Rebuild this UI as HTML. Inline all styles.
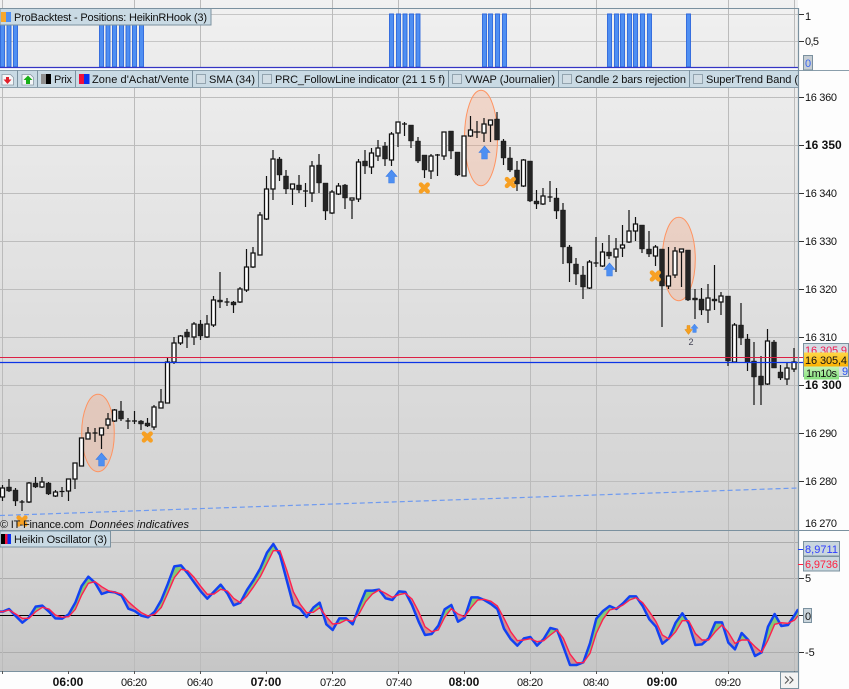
<!DOCTYPE html>
<html><head><meta charset="utf-8"><title>Chart</title>
<style>html,body{margin:0;padding:0;background:#fff;overflow:hidden;width:849px;height:689px}svg{display:block;overflow:hidden}text{font-family:"Liberation Sans",sans-serif;fill:#111}</style>
</head><body>
<svg xmlns="http://www.w3.org/2000/svg" width="849" height="689" viewBox="0 0 849 689">
<defs>
<linearGradient id="gT" x1="0" y1="0" x2="0" y2="1"><stop offset="0" stop-color="#f1f1f1"/><stop offset="1" stop-color="#ebebeb"/></linearGradient>
<linearGradient id="gM" x1="0" y1="0" x2="0" y2="1"><stop offset="0" stop-color="#ececec"/><stop offset="1" stop-color="#d2d2d2"/></linearGradient>
<linearGradient id="gO" x1="0" y1="0" x2="0" y2="1"><stop offset="0" stop-color="#d6d6d6"/><stop offset="1" stop-color="#c6c6c6"/></linearGradient>
<linearGradient id="gY" x1="0" y1="0" x2="0" y2="1"><stop offset="0" stop-color="#ffd84a"/><stop offset="1" stop-color="#fbb000"/></linearGradient>
<linearGradient id="gG" x1="0" y1="0" x2="0" y2="1"><stop offset="0" stop-color="#c4f4b4"/><stop offset="1" stop-color="#84e07c"/></linearGradient>
<clipPath id="cO"><rect x="0" y="531" width="798" height="140"/></clipPath>
<path id="bu" d="M-30 245L0 245 8 245 27 237 47 258 67 278 87 262 107 230 127 227 147 245 166 265 186 266 206 253 226 218 245 168 265 140 285 158 305 192 325 185 345 187 365 197 385 236 404 243 424 257 444 262 464 245 484 210 503 163 523 109 543 106 563 130 583 158 603 185 622 206 642 185 662 164 682 190 701 226 721 218 741 180 761 150 781 115 801 68 820 42 840 75 860 150 880 225 900 236 920 261 940 233 959 218 979 283 998 300 1018 265 1038 265 1058 283 1078 228 1097 182 1117 182 1137 179 1157 205 1177 210 1197 184 1216 186 1236 225 1256 275 1275 315 1295 312 1315 287 1334 238 1354 225 1374 275 1394 263 1414 202 1433 202 1453 210 1473 222 1492 237 1512 296 1532 327 1552 347 1572 325 1591 321 1611 347 1631 327 1651 294 1671 299 1690 350 1710 405 1730 405 1750 397 1770 340 1789 266 1809 243 1829 228 1849 237 1869 220 1889 199 1908 199 1928 228 1948 268 1968 290 1987 341 2007 325 2027 278 2047 250 2066 280 2086 345 2106 343 2126 325 2146 277 2166 277 2185 338 2205 358 2225 309 2245 330 2265 378 2285 367 2304 290 2324 252 2344 288 2364 285 2384 255 2393 240 2420 240 2420 450-30 450Z"/>
<path id="ru" d="M-30 245L0 245 8 245 27 240 47 252 67 265 87 265 107 245 127 232 147 237 166 255 186 262 206 260 226 238 245 195 265 160 285 155 305 170 325 182 345 187 365 192 385 215 404 232 424 248 444 258 464 253 484 232 503 190 523 143 543 118 563 122 583 143 603 170 622 193 642 192 662 178 682 183 701 205 721 218 741 198 761 170 781 140 801 100 820 62 840 62 860 120 880 185 900 222 920 248 940 247 959 233 979 260 998 282 1018 280 1038 270 1058 274 1078 250 1097 215 1117 192 1137 180 1157 190 1177 202 1197 194 1216 190 1236 207 1256 245 1275 290 1295 305 1315 300 1334 262 1354 236 1374 252 1394 260 1414 232 1433 210 1453 208 1473 214 1492 228 1512 265 1532 305 1552 332 1572 330 1591 326 1611 335 1631 332 1651 315 1671 300 1690 325 1710 372 1730 398 1750 398 1770 370 1789 310 1809 268 1829 240 1849 235 1869 225 1889 210 1908 203 1928 218 1948 245 1968 275 1987 315 2007 327 2027 305 2047 272 2066 272 2086 310 2106 330 2126 330 2146 305 2166 285 2185 307 2205 340 2225 330 2245 330 2265 350 2285 367 2304 330 2324 283 2344 278 2364 280 2384 270 2393 258 2420 258 2420 450-30 450Z"/>
<mask id="mR" maskUnits="userSpaceOnUse" x="-35" y="-5" width="2470" height="460"><rect x="-35" y="-5" width="2470" height="460" fill="#fff"/><use href="#ru" fill="#000"/></mask>
<mask id="mB" maskUnits="userSpaceOnUse" x="-35" y="-5" width="2470" height="460"><rect x="-35" y="-5" width="2470" height="460" fill="#fff"/><use href="#bu" fill="#000"/></mask>
<path id="arU" d="M0 0L5.500 6.500H2.800V13H-2.800V6.500H-5.500Z" fill="#4d8ff2" stroke="#3a7be6" stroke-width=".6"/>
<path id="xm" d="M-3.400-3.400L3.400 3.400M3.400-3.400L-3.400 3.400" stroke="#f7a023" stroke-width="4.400" stroke-linecap="round" fill="none"/>
</defs>

<rect width="849" height="689" fill="#fdfdfd"/>
<!-- panels -->
<rect x="0" y="0" width="798" height="68" fill="url(#gT)"/>
<rect x="0" y="87" width="798" height="444" fill="url(#gM)"/>
<rect x="0" y="531" width="798" height="140" fill="url(#gO)"/>

<!-- grid -->
<path d="M0 14.500H798M0 41.500H798" stroke="#c6c6c6" fill="none"/>
<path d="M0 97.500H798M0 145.500H798M0 193.500H798M0 241.500H798M0 289.500H798M0 337.500H798M0 385.500H798M0 433.500H798M0 481.500H798" stroke="#bdbdbd" fill="none"/>
<path d="M0 542.500H798M0 578.500H798M0 652.500H798" stroke="#adadad" fill="none"/>
<path d="M2.500 0V68M134.500 0V68M200.500 0V68M332.500 0V68M398.500 0V68M530.500 0V68M596.500 0V68M728.500 0V68M794.500 0V68M2.500 87V671M134.500 87V671M200.500 87V671M332.500 87V671M398.500 87V671M530.500 87V671M596.500 87V671M728.500 87V671M794.500 87V671" stroke="#bbb" fill="none"/>

<!-- position bars -->
<path fill="#4f8ff2" stroke="#2c66dc" stroke-width=".9" d="M.5 14h4v53h-4zM7 14h4v53h-4zM13.500 14h4v53h-4zM99.500 14h4v53h-4zM106 14h4v53h-4zM112.500 14h4v53h-4zM119.500 14h4v53h-4zM126 14h4v53h-4zM132.500 14h4v53h-4zM139.500 14h4v53h-4zM389.500 14h4v53h-4zM396.500 14h4v53h-4zM403 14h4v53h-4zM409.500 14h4v53h-4zM416 14h4v53h-4zM482.500 14h4v53h-4zM488.500 14h4v53h-4zM495.500 14h4v53h-4zM502.500 14h4v53h-4zM607.500 14h4v53h-4zM614.500 14h4v53h-4zM620.500 14h4v53h-4zM627.500 14h4v53h-4zM633.500 14h4v53h-4zM640.500 14h4v53h-4zM647.500 14h4v53h-4zM686.500 14h4v53h-4z"/>
<path d="M0 67.500H798" stroke="#3434c4" stroke-width="1.200"/>
<path d="M0 8.500H799" stroke="#7b919f"/>

<!-- ellipses -->
<g fill="#f7a27a" fill-opacity=".3" stroke="#ff9360" stroke-width="1">
<ellipse cx="98" cy="433" rx="16.300" ry="38.700"/>
<ellipse cx="481" cy="138" rx="16.500" ry="47.700"/>
<ellipse cx="678.800" cy="259" rx="16.500" ry="41.700"/>
</g>

<!-- dashed line -->
<path d="M0 515.500L798 488" stroke="#6e9af0" stroke-width="1.200" stroke-dasharray="5 3" fill="none"/>

<!-- wicks -->
<path fill="none" stroke="#111" stroke-width="1.200" d="M2.500 485V501M9 479V492M15.500 488V506M22 500V511M19.500 502H24.500M29 482V503M35.500 477V488M42 477V488M48.500 482V495M55.500 490V497M62 487V497M59.500 491.500H64.500M68.500 479V501M75 463V489M81.500 438V466M88 427V439M95 428V442M92.500 433H97.500M101.500 428V449M108 413V429M114.500 409V422M121 401V421M128 418V429M125.500 421H130.500M134.500 411V424M132 421H137M141 420V430M147.500 418V427M154 405V430M161 389V408M167.500 357V403M174 337V364M180.500 335V345M187 329V348M194 322V345M200.500 320V340M207 315V338M213.500 296V327M220 272V308M227 298V306M224.500 302H229.500M233.500 301V313M240 287V303M246.500 249V292M253 247V268M260 212V255M266.500 176V220M273 150V200M279.500 157V181M286 170V194M292.500 184V205M299 175V193M305.500 183V207M303 191H308M312 161V202M319 154V193M325.500 183V220M332 190V214M338.500 183V195M345 184V209M352 198V219M358.500 159V202M365 150V174M371.500 148V174M378 140V161M385 142V166M391.500 132V166M398 122V147M404.500 122V136M402 124H407M411 125V148M418 137V163M424.500 155V178M431 154V179M437.500 154V176M435 155H440M444 132V160M451 131V159M457.500 152V176M464 136V176M470.500 116V137M477 121V138M473.500 132H480.500M484 118V142M490.500 120V142M497 112V140M503.500 139V165M510 147V172M517 161V191M523.500 159V187M530 161V202M536.500 190V209M543 188V205M550 181V202M547.500 197H552.500M556.500 188V219M563 203V264M569.500 245V282M576 258V285M583 266V299M589.500 260V289M596 237V267M593.500 263H598.500M602.500 243V267M609 235V259M616 238V272M622.500 225V257M629 210V243M635.500 217V241M642 225V253M649 231V257M655.500 245V266M662 249V327M668.500 247V289M675 247V278M681.500 249V287M688 250V301M695 289V319M701.500 288V315M708 284V323M714.500 265V310M721 292V315M728 296V366M734.500 323V362M741 303V345M747.500 334V371M754 342V405M761 356V405M767.500 329V385M774 340V368M780.500 365V380M787 363V385M794 348V372"/>

<!-- black bodies -->
<path fill="#242424" stroke="#111" stroke-width=".4" d="M6.500 487h5V491h-5zM13 490h5V501h-5zM33 483h5V487h-5zM46 483h5V494h-5zM118.500 411h5V419h-5zM138.500 421h5V424h-5zM145 423h5V426h-5zM184.500 332h5V337h-5zM198 324h5V336h-5zM217.500 300h5V302h-5zM231 302h5V305h-5zM277 159h5V175h-5zM283.500 176h5V189h-5zM296.500 185h5V190h-5zM316.500 165h5V183h-5zM323 183h5V211h-5zM342.500 185h5V198h-5zM362.500 161h5V166h-5zM382.500 146h5V159h-5zM408.500 125h5V141h-5zM415.500 141h5V161h-5zM422 155h5V170h-5zM448.500 131h5V151h-5zM455 152h5V175h-5zM494.500 119h5V140h-5zM501 141h5V158h-5zM507.500 158h5V170h-5zM514.500 170h5V184h-5zM527.500 161h5V201h-5zM534 201h5V204h-5zM554 198h5V211h-5zM560.500 210h5V247h-5zM567 247h5V263h-5zM573.500 264h5V274h-5zM580.500 275h5V287h-5zM606.500 252h5V256h-5zM639.500 225h5V249h-5zM646.500 249h5V254h-5zM659.500 249h5V286h-5zM685.500 250h5V300h-5zM699 299h5V310h-5zM712 299h5V301h-5zM692.500 298h5V300h-5zM725.500 296h5V361h-5zM738.500 325h5V338h-5zM745 339h5V362h-5zM751.500 361h5V377h-5zM758.500 376h5V385h-5zM771.500 342h5V368h-5zM778 372h5V378h-5z"/>

<!-- white bodies -->
<path fill="#fff" stroke="#111" stroke-width="1.300" d="M.5 488h4V497h-4zM27 483h4V502h-4zM40 482h4V487h-4zM53.500 492h4V496h-4zM66.500 479h4V491h-4zM73 463h4V479h-4zM79.500 438h4V466h-4zM86 433h4V439h-4zM99.500 428h4V435h-4zM106 419h4V425h-4zM112.500 410h4V421h-4zM152 407h4V427h-4zM159 402h4V408h-4zM165.500 362h4V403h-4zM172 343h4V362h-4zM178.500 336h4V343h-4zM192 324h4V337h-4zM205 324h4V337h-4zM211.500 300h4V325h-4zM238 289h4V302h-4zM244.500 267h4V290h-4zM251 253h4V267h-4zM258 215h4V255h-4zM264.500 189h4V219h-4zM271 159h4V189h-4zM290.500 184h4V189h-4zM310 166h4V193h-4zM330 192h4V213h-4zM336.500 186h4V194h-4zM350 198h4V200h-4zM356.500 162h4V199h-4zM369.500 153h4V167h-4zM376 148h4V156h-4zM389.500 134h4V160h-4zM396 122h4V133h-4zM429 156h4V171h-4zM442 132h4V156h-4zM462 136h4V176h-4zM468.500 130h4V136h-4zM482 124h4V133h-4zM488.500 120h4V125h-4zM521.500 160h4V186h-4zM541 196h4V204h-4zM587.500 262h4V288h-4zM600.500 252h4V266h-4zM614 249h4V257h-4zM620.500 245h4V248h-4zM627 231h4V242h-4zM633.500 224h4V231h-4zM653.500 247h4V256h-4zM666.500 276h4V286h-4zM673 251h4V275h-4zM679.500 249h4V252h-4zM706 298h4V310h-4zM719 296h4V302h-4zM732.500 325h4V362h-4zM765.500 341h4V384h-4zM785 368h4V379h-4zM792 362h4V369h-4z"/>

<!-- arrows & crosses -->
<use href="#arU" transform="translate(101.500 453)"/>
<use href="#arU" transform="translate(391.500 170)"/>
<use href="#arU" transform="translate(484.500 146)"/>
<use href="#arU" transform="translate(609.500 263)"/>
<use href="#arU" transform="translate(694.500 324) scale(.65)"/>
<path d="M688.500 334.500L684.800 329.500H687V325.500H690V329.500H692.200Z" fill="#f5a020" stroke="#e08a10" stroke-width=".5"/>
<text x="688.500" y="345" font-size="9" style="fill:#445">2</text>
<use href="#xm" transform="translate(147.300 437)"/>
<use href="#xm" transform="translate(424.300 188)"/>
<use href="#xm" transform="translate(510.300 182.500)"/>
<use href="#xm" transform="translate(655.300 276)"/>
<use href="#xm" transform="translate(22 521)"/>

<!-- price lines -->
<path d="M0 357.500H804" stroke="#dc2044" stroke-width="1.100"/>
<path d="M0 362.500H804" stroke="#0c34e6" stroke-width="1.300"/>

<!-- footer text main -->
<text x="0" y="528" font-size="11" textLength="84">© IT-Finance.com</text>
<text x="89.500" y="528" font-size="11" font-style="italic" textLength="99.500">Données indicatives</text>

<!-- oscillator -->
<path d="M0 615.500H798" stroke="#000" stroke-width="1.100"/>
<g clip-path="url(#cO)"><g transform="translate(0 530) scale(.33333)">
<use href="#bu" fill="#84c874" mask="url(#mR)"/>
<use href="#ru" fill="#cf8f90" mask="url(#mB)"/>
<use href="#bu" fill="none" stroke="#1242f2" stroke-width="7.500" stroke-linejoin="round"/>
<use href="#ru" fill="none" stroke="#ff1f4e" stroke-width="4.200" stroke-linejoin="round"/>
</g></g>

<!-- borders -->
<path d="M0 530.500H849" stroke="#7b919f"/>
<path d="M798.500 8V689" stroke="#7b919f" stroke-width="1.200"/>
<path d="M0 671.500H798" stroke="#7b919f"/>

<!-- toolbar -->
<rect x="0" y="70" width="798" height="17" fill="#c9dae4"/>
<path d="M0 70.500H849M0 87.500H798" stroke="#8a9eab" fill="none"/>
<path d="M17.500 70V87M37.500 70V87M75.500 70V87M192.500 70V87M258.500 70V87M448.500 70V87M558.500 70V87M689.500 70V87" stroke="#7b919f" fill="none"/>
<path d="M2 74.500h8.500l3 3v7.500H2z" fill="#f4f6f8" stroke="#8b9aa6" stroke-width=".8"/>
<path d="M7.500 84L3.500 79.500H6V77H9V79.500H11.500Z" fill="#e0202c"/>
<path d="M22 74.500h8.500l3 3v7.500H22z" fill="#f4f6f8" stroke="#8b9aa6" stroke-width=".8"/>
<path d="M28 75.500L32.500 80H30V84H26V80H23.500Z" fill="#18b018"/>
<rect x="41" y="74" width="5" height="10" fill="#8f8f8f"/><rect x="46" y="74" width="5" height="10" fill="#000"/>
<rect x="79" y="74" width="5" height="10" fill="#f0103a"/><rect x="84" y="74" width="5.500" height="10" fill="#0a30f0"/>
<g fill="#d2dde4" stroke="#8d9ea9" stroke-width=".9">
<rect x="196.500" y="74.500" width="9" height="9"/>
<rect x="262.500" y="74.500" width="9" height="9"/>
<rect x="452.500" y="74.500" width="9" height="9"/>
<rect x="562.500" y="74.500" width="9" height="9"/>
<rect x="693.500" y="74.500" width="9" height="9"/>
</g>
<g font-size="11">
<text x="54" y="83" textLength="18">Prix</text>
<text x="92" y="83" textLength="97">Zone d'Achat/Vente</text>
<text x="209" y="83" textLength="46">SMA (34)</text>
<text x="275" y="83" textLength="170">PRC_FollowLine indicator (21 1 5 f)</text>
<text x="465" y="83" textLength="90">VWAP (Journalier)</text>
<text x="575" y="83" textLength="111">Candle 2 bars rejection</text>
<text x="706" y="83" textLength="92">SuperTrend Band (</text>
</g>
<rect x="798" y="71" width="51" height="16" fill="#fdfdfd"/>
<path d="M798.500 70V87" stroke="#7b919f" stroke-width="1.200"/>

<!-- legend boxes -->
<rect x="0" y="8.500" width="211" height="16.500" fill="#c9dae4" stroke="#7b919f"/>
<rect x="1" y="12" width="5" height="10" fill="#f7a72c"/><rect x="6" y="12" width="5" height="10" fill="#4f8ff2"/>
<text x="14" y="21" font-size="11" textLength="193">ProBacktest - Positions: HeikinRHook (3)</text>
<rect x="0" y="531" width="110.500" height="16" fill="#c9dae4" stroke="#7b919f"/>
<rect x="1" y="534" width="4" height="10" fill="#000"/><rect x="5" y="534" width="2.500" height="10" fill="#f0103a"/><rect x="7.500" y="534" width="3.500" height="10" fill="#0a30f0"/>
<text x="14" y="543" font-size="11" textLength="93">Heikin Oscillator (3)</text>

<!-- right axis ticks -->
<path d="M799 14.500h5M799 41.500h5M799 97.500h5M799 145.500h5M799 193.500h5M799 241.500h5M799 289.500h5M799 337.500h5M799 385.500h5M799 433.500h5M799 481.500h5M799 578.500h5M799 615.500h5M799 652.500h5" stroke="#333" fill="none"/>
<path d="M798 549.500h6" stroke="#2040ff"/><path d="M798 564.500h6" stroke="#ff2040"/>

<!-- right axis labels -->
<g font-size="11">
<text x="805" y="20">1</text>
<text x="805" y="45" textLength="14">0,5</text>
<text x="805" y="101" textLength="32">16 360</text>
<text x="805" y="149" font-size="12" font-weight="bold">16 350</text>
<text x="805" y="197" textLength="32">16 340</text>
<text x="805" y="245" textLength="32">16 330</text>
<text x="805" y="293" textLength="32">16 320</text>
<text x="805" y="341" textLength="32">16 310</text>
<text x="805" y="389" font-size="12" font-weight="bold">16 300</text>
<text x="805" y="437" textLength="32">16 290</text>
<text x="805" y="485" textLength="32">16 280</text>
<text x="805" y="527" textLength="32">16 270</text>
<text x="805" y="582">5</text>
<text x="805" y="656">-5</text>
</g>
<rect x="803.500" y="55.500" width="9" height="14.500" fill="#c6cdd3" stroke="#7b919f"/>
<text x="805" y="67" font-size="11" style="fill:#3a66f0">0</text>
<rect x="803.500" y="608.500" width="8" height="14" fill="#c9d4db" stroke="#7b919f"/>
<text x="805" y="620" font-size="11">0</text>

<rect x="803.500" y="541.500" width="36" height="14.500" fill="#c9d6de" stroke="#7b919f"/>
<text x="805" y="553" font-size="11" textLength="33" style="fill:#2d3cff">8,9711</text>
<rect x="803.500" y="556.500" width="36" height="14.500" fill="#c9d6de" stroke="#7b919f"/>
<text x="805" y="568" font-size="11" textLength="33" style="fill:#ff2040">6,9736</text>

<!-- price tags -->
<rect x="803.500" y="343.500" width="45" height="33" fill="#d4dde4" stroke="#7b919f"/>
<text x="805" y="354" font-size="11" textLength="42" style="fill:#f01850">16 305,9</text>
<text x="842" y="375" font-size="11" style="fill:#2850f0">9</text>
<rect x="804" y="352.500" width="44" height="14" fill="url(#gY)"/>
<text x="805" y="364" font-size="11" textLength="42">16 305,4</text>
<rect x="804" y="366.500" width="35" height="13" fill="url(#gG)"/>
<text x="806" y="377" font-size="11" textLength="31">1m10s</text>

<!-- time axis -->
<path d="M2.500 671v3M68.500 671v3M134.500 671v3M200.500 671v3M266.500 671v3M332.500 671v3M398.500 671v3M464.500 671v3M530.500 671v3M596.500 671v3M662.500 671v3M728.500 671v3M794.500 671v3" stroke="#555" fill="none"/>
<g font-size="11" text-anchor="middle">
<text x="68" y="686" font-size="12" font-weight="bold">06:00</text>
<text x="134" y="686" textLength="26">06:20</text>
<text x="200" y="686" textLength="26">06:40</text>
<text x="266" y="686" font-size="12" font-weight="bold">07:00</text>
<text x="333" y="686" textLength="26">07:20</text>
<text x="399" y="686" textLength="26">07:40</text>
<text x="464" y="686" font-size="12" font-weight="bold">08:00</text>
<text x="530" y="686" textLength="26">08:20</text>
<text x="596" y="686" textLength="26">08:40</text>
<text x="662" y="686" font-size="12" font-weight="bold">09:00</text>
<text x="728" y="686" textLength="26">09:20</text>
</g>
<rect x="780.500" y="672" width="18" height="16.500" fill="#f3f3f3" stroke="#7b919f"/>
<path d="M785 676.500l3.500 3.500-3.500 3.500M789.500 676.500l3.500 3.500-3.500 3.500" fill="none" stroke="#555" stroke-width="1.100"/>
</svg>
</body></html>
